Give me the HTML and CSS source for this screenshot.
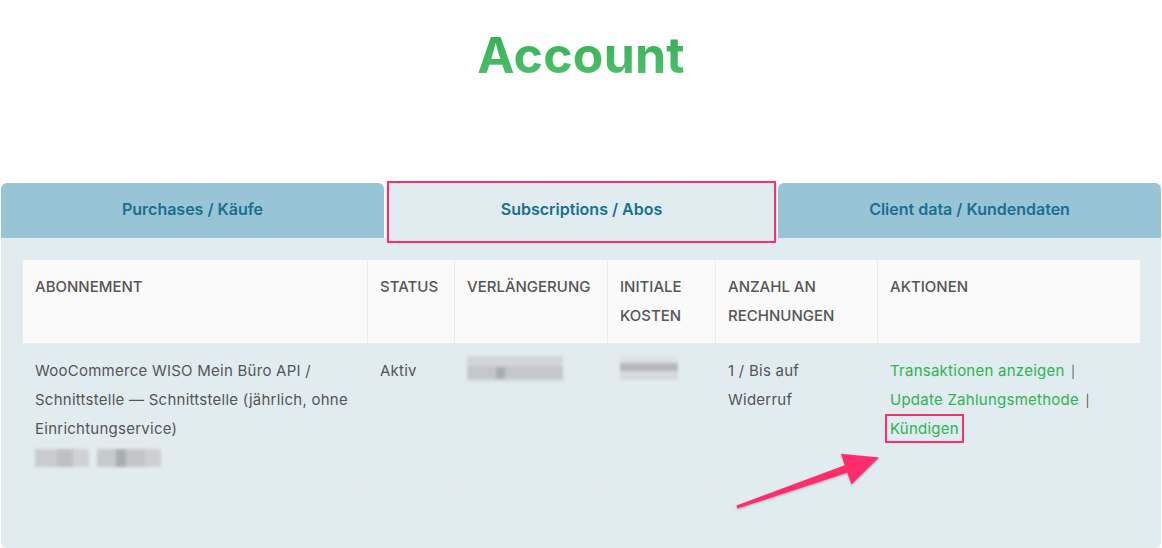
FILE: index.html
```html
<!DOCTYPE html>
<html lang="de">
<head>
  <meta charset="UTF-8" />
  <meta name="viewport" content="width=device-width, initial-scale=1.0" />
  <title>Account</title>
  <link rel="stylesheet" href="styles.css">
</head>
<body>
  <div class="page">
    <h1 class="title">Account</h1>

    <div class="tabs">
      <div class="tab tab-left">Purchases / Käufe</div>
      <div class="tab tab-mid active">Subscriptions / Abos</div>
      <div class="tab tab-right">Client data / Kundendaten</div>
    </div>

    <div class="panel">
      <table class="subs">
        <colgroup>
          <col style="width: 345px">
          <col style="width: 87px">
          <col style="width: 153px">
          <col style="width: 108px">
          <col style="width: 162px">
          <col style="width: 263px">
        </colgroup>
        <thead>
          <tr>
            <th>Abonnement</th>
            <th>Status</th>
            <th>Verlängerung</th>
            <th>Initiale Kosten</th>
            <th>Anzahl an Rechnungen</th>
            <th>Aktionen</th>
          </tr>
        </thead>
        <tbody>
          <tr>
            <td>
              WooCommerce WISO Mein Büro API / Schnittstelle — Schnittstelle (jährlich, ohne Einrichtungservice)
              <div class="blur-row">
                <span class="blur blur-a"></span>
                <span class="blur blur-b"></span>
              </div>
            </td>
            <td>Aktiv</td>
            <td><span class="blur blur-date"></span></td>
            <td><span class="blur blur-cost"></span></td>
            <td class="count">1 / Bis auf Widerruf</td>
            <td>
              <div><a class="action" href="#">Transaktionen anzeigen</a> <span class="sep">|</span></div>
              <div><a class="action" href="#">Update Zahlungsmethode</a> <span class="sep">|</span></div>
              <div><a class="action marked" href="#">Kündigen</a></div>
            </td>
          </tr>
        </tbody>
      </table>
    </div>

    <svg class="arrow" width="1162" height="548" viewBox="0 0 1162 548">
      <polygon points="736.5,480.4 844.7,440.2 841,428.8 879,432.5 851.5,459.5 847.3,447.8 737.5,483.6"
               fill="#ff2d6b" />
    </svg>
  </div>
</body>
</html>
```

FILE: styles.css
```css
body {
  margin: 0;
  background: #fff;
  font-family: Inter, "Open Sans", sans-serif;
  color: #555;
}
.page {
  position: relative;
  padding: 0 1px;
  width: 1160px;
}
.title {
  margin: 25px 0 0;
  text-align: center;
  font-size: 50px;
  line-height: 60px;
  font-weight: 700;
  letter-spacing: 0.2px;
  background: linear-gradient(#30aa52, #52c46e);
  -webkit-background-clip: text;
  background-clip: text;
  color: transparent;
}
.tabs {
  display: flex;
  gap: 1px;
  margin-top: 98px;
}
.tab {
  height: 55px;
  box-sizing: border-box;
  padding-bottom: 3px;
  display: flex;
  align-items: center;
  justify-content: center;
  background: #98c5d6;
  color: #17708f;
  font-size: 16px;
  font-weight: 600;
  border-radius: 6px 6px 0 0;
}
.tab-left {
  flex: 0 0 383px;
}
.tab-mid {
  flex: 0 0 391px;
  margin-left: 1px;
}
.tab-right {
  flex: 1;
}
.tab.active {
  position: relative;
  background: #e1ecf1;
  border-radius: 0;
}
.tab.active::after {
  content: "";
  position: absolute;
  top: -2px;
  left: 1px;
  right: 1px;
  bottom: -5px;
  border: 2.5px solid #ff2d6b;
}
.panel {
  background: #e1ecf1;
  padding: 21px 21px 62px;
  border-radius: 0 0 6px 6px;
}
.subs {
  width: 1118px;
  table-layout: fixed;
  border-collapse: collapse;
  font-size: 15px;
  line-height: 29px;
}
.subs th, .subs td {
  border: 1px solid #e7ebed;
  padding: 12px 12px 13px;
  text-align: left;
  vertical-align: top;
}
.subs th {
  background: #fafafa;
  font-weight: 500;
  text-transform: uppercase;
  color: #555;
}
.subs td {
  color: #555;
  letter-spacing: 0.25px;
}
.subs td.count {
  padding-right: 20px;
}
.blur-row {
  display: flex;
  gap: 8px;
  height: 29px;
  align-items: center;
}
.blur {
  display: block;
  filter: blur(1.5px);
}
.blur-a {
  width: 54px;
  height: 18px;
  background: linear-gradient(90deg, #c9ccce 0 40%, #bdc1c3 40% 70%, #cfd2d4 70%);
}
.blur-b {
  width: 64px;
  height: 18px;
  background: linear-gradient(90deg, #c6cacc 0 30%, #a9aeb0 30% 45%, #c2c6c8 45% 75%, #ccd0d2 75%);
}
.blur-date {
  width: 96px;
  height: 26px;
  background:
    linear-gradient(90deg, transparent 0 30%, #a8adb0 30% 40%, transparent 40%) 0 11px / 100% 12px no-repeat,
    linear-gradient(#d1d6d9 0 40%, #c3c7ca 40% 90%, #d6dde0 90%);
}
.blur-cost {
  width: 58px;
  height: 24px;
  background:
    linear-gradient(#dbe2e5 0 30%, #b5b9bb 30% 62%, #d4dadd 62%);
}
.action {
  color: #2db34f;
  text-decoration: none;
}
.sep {
  color: #555;
  font-size: 12px;
  line-height: 0;
  margin-left: 2px;
}
.marked {
  outline: 2.5px solid #ff2d6b;
  outline-offset: 3px;
}
.arrow {
  position: absolute;
  left: 0;
  top: 0;
  pointer-events: none;
  filter: drop-shadow(0 1px 1px rgba(0,0,0,0.25));
}
```
